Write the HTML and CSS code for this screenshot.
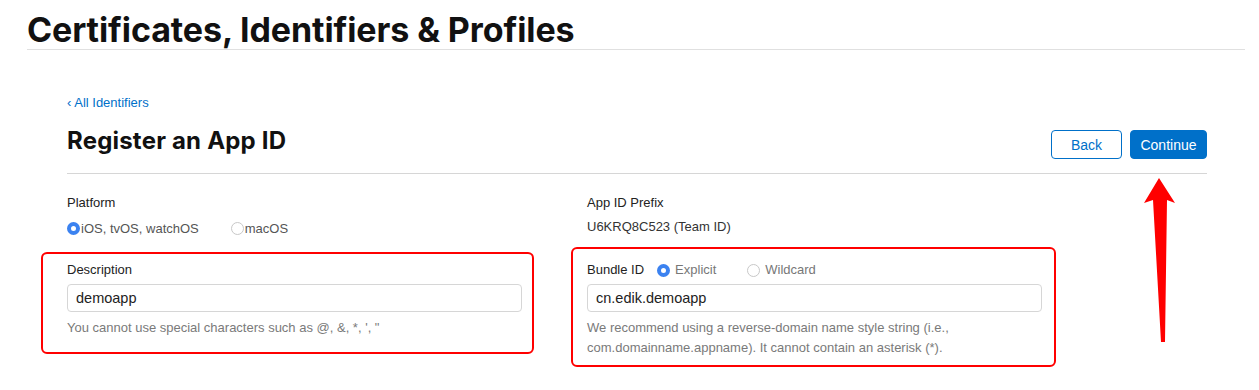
FILE: index.html
```html
<!DOCTYPE html>
<html>
  <head>
    <title>Register an App ID</title>
    <meta charset="UTF-8" />
    <link rel="stylesheet" href="styles.css">
  </head>
  <body>
    <header class="page-head">
      <h1>Certificates, Identifiers &amp; Profiles</h1>
    </header>

    <main class="content">
      <a class="back-link" href="#">&lsaquo; All Identifiers</a>

      <div class="title-row">
        <h2>Register an App ID</h2>
        <div class="actions">
          <button class="btn btn-back">Back</button>
          <button class="btn btn-continue">Continue</button>
        </div>
      </div>

      <div class="form-grid">
        <div class="field">
          <div class="label">Platform</div>
          <div class="radios">
            <span class="radio checked"></span><span class="radio-text">iOS, tvOS, watchOS</span>
            <span class="radio gap-left"></span><span class="radio-text">macOS</span>
          </div>
        </div>

        <div class="field">
          <div class="label">App ID Prefix</div>
          <div class="value">U6KRQ8C523 (Team ID)</div>
        </div>

        <div class="field boxed boxed-left">
          <div class="label">Description</div>
          <input class="text-input" type="text" value="demoapp">
          <p class="help">You cannot use special characters such as @, &amp;, *, ', "</p>
        </div>

        <div class="field boxed boxed-right">
          <div class="label bundle">
            <span>Bundle ID</span>
            <span class="radio checked bundle-radio"></span><span class="muted">Explicit</span>
            <span class="radio wild-radio"></span><span class="muted">Wildcard</span>
          </div>
          <input class="text-input" type="text" value="cn.edik.demoapp">
          <p class="help">We recommend using a reverse-domain name style string (i.e., com.domainname.appname). It cannot contain an asterisk (*).</p>
        </div>
      </div>
    </main>

    <svg class="arrow" width="40" height="170" viewBox="1140 175 40 170">
      <polygon points="1159,178 1175,203 1167,200 1165,342 1161,342 1153,200 1144,203" fill="#ff0000"/>
    </svg>
  </body>
</html>
```

FILE: styles.css
```css
body {
  margin: 0;
  min-height: 390px;
  background: #fff;
  font-family: "Liberation Sans", Arial, sans-serif;
  color: #111;
}

.page-head {
  margin: 0 14px 0 27px;
  border-bottom: 1px solid #e0e0e0;
  height: 49px;
}

.page-head h1 {
  margin: 0;
  padding-top: 11px;
  font-family: Inter, "Noto Sans", sans-serif;
  font-size: 34px;
  line-height: 38px;
  font-weight: 700;
  letter-spacing: -0.1px;
  color: #111;
}

.content {
  width: 1140px;
  margin-left: 67px;
  padding-top: 44px;
  padding-bottom: 32px;
}

.back-link {
  display: block;
  font-size: 13px;
  line-height: 18px;
  color: #0070c9;
  text-decoration: none;
}

.title-row {
  display: flex;
  align-items: flex-start;
  justify-content: space-between;
  margin-top: 18px;
  padding-bottom: 14px;
  border-bottom: 1px solid #d6d6d6;
}

.title-row h2 {
  margin: 0;
  font-family: Inter, "Noto Sans", sans-serif;
  font-size: 24px;
  font-weight: 700;
  line-height: 22px;
  letter-spacing: 0.2px;
}

.actions {
  display: flex;
  gap: 8px;
}

.btn {
  height: 29px;
  border-radius: 4px;
  font-family: "Liberation Sans", Arial, sans-serif;
  font-size: 14px;
  padding: 0;
}

.btn-back {
  width: 71px;
  background: #fff;
  color: #0070c9;
  border: 1px solid #0070c9;
}

.btn-continue {
  width: 77px;
  background: #0070c9;
  color: #fff;
  border: 1px solid #0070c9;
}

.form-grid {
  display: grid;
  grid-template-columns: 455px 455px;
  align-items: start;
  column-gap: 65px;
  row-gap: 24px;
  padding-top: 20px;
}

.label {
  font-size: 13px;
  line-height: 18px;
  color: #222;
}

.value {
  font-size: 13px;
  line-height: 18px;
  margin-top: 6px;
  color: #333;
}

.radios {
  display: flex;
  align-items: center;
  margin-top: 7px;
  height: 18px;
  font-size: 13px;
  color: #555;
}

.radio {
  display: inline-block;
  box-sizing: border-box;
  width: 13px;
  height: 13px;
  border-radius: 50%;
  border: 1px solid #c8c8c8;
  background: #fff;
  margin-right: 1px;
}

.radio.checked {
  border: 4px solid #3b82f0;
}

.radio.gap-left {
  margin-left: 32px;
}

.field {
  position: relative;
}

.boxed::before {
  content: "";
  position: absolute;
  border: 2px solid #ff0000;
  border-radius: 6px;
  pointer-events: none;
}

.boxed-left::before {
  top: -9px;
  left: -26px;
  right: -12px;
  bottom: -16px;
}

.boxed-right::before {
  top: -14px;
  left: -16px;
  right: -14px;
  bottom: -9px;
}

.bundle {
  display: flex;
  align-items: center;
  height: 18px;
}

.bundle .muted {
  color: #777;
}

.bundle-radio {
  margin-left: 13px;
  margin-right: 5px;
}

.wild-radio {
  margin-left: 31px;
  margin-right: 5px;
}

.text-input {
  display: block;
  box-sizing: border-box;
  width: 455px;
  height: 28px;
  margin-top: 5px;
  padding: 0 8px;
  border: 1px solid #d6d6d6;
  border-radius: 4px;
  font-family: "Liberation Sans", Arial, sans-serif;
  font-size: 14.5px;
  color: #222;
}

.help {
  margin: 6px 0 0;
  font-size: 13px;
  line-height: 20px;
  color: #7a7a7a;
}

.arrow {
  position: absolute;
  left: 1140px;
  top: 175px;
  pointer-events: none;
}
```
